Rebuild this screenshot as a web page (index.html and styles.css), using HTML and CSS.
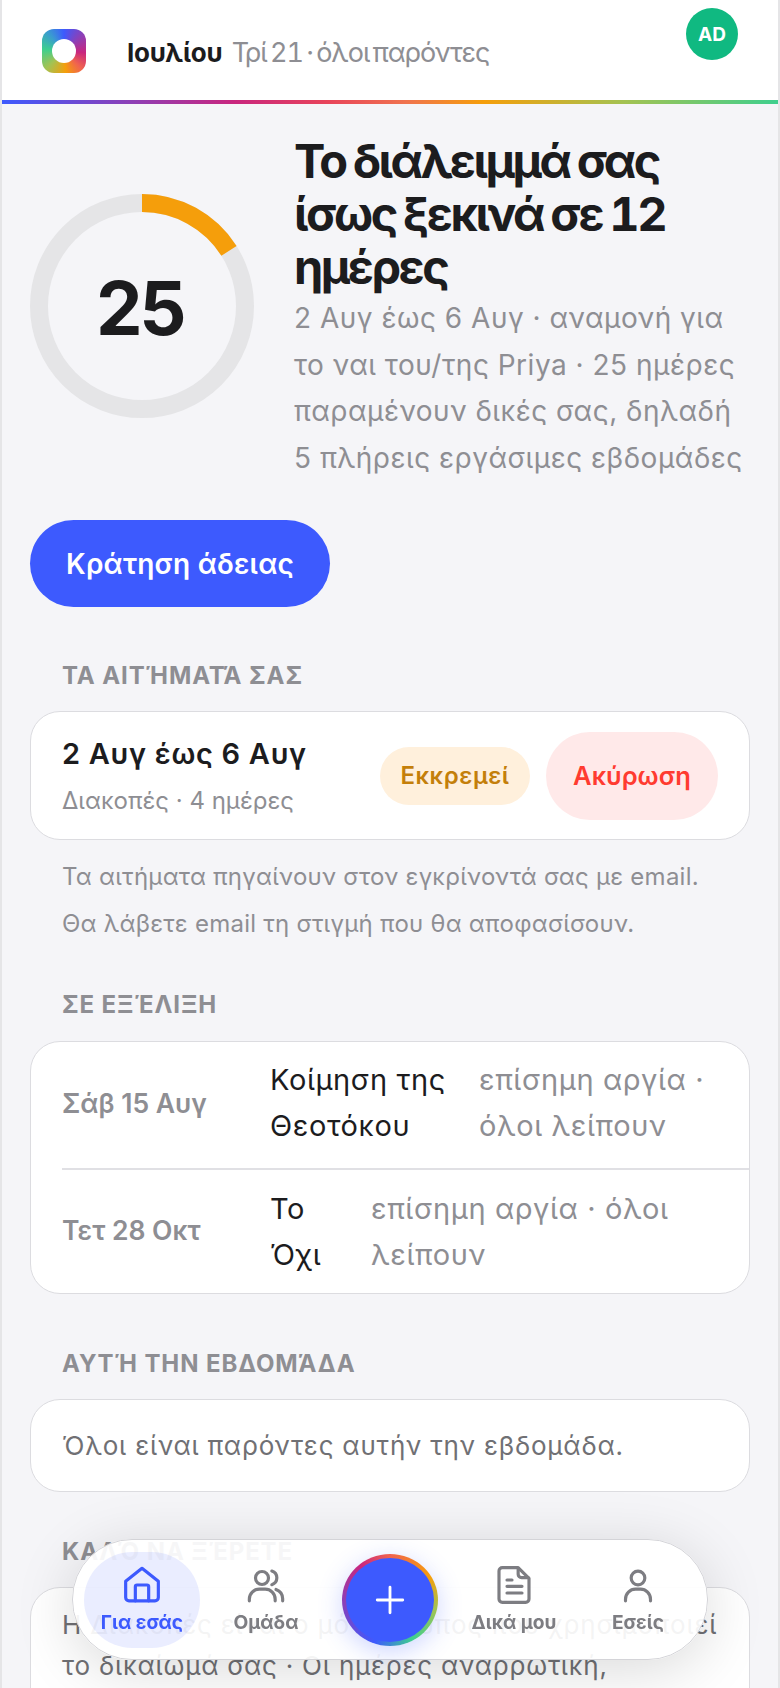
FILE: index.html
```html
<!DOCTYPE html>
<html lang="el">
  <head>
    <meta charset="UTF-8" />
    <meta name="viewport" content="width=device-width, initial-scale=1.0" />
    <title>Ιουλίου</title>
    <link rel="stylesheet" href="styles.css">
  </head>
  <body>
    <div class="shell">
      <header class="topbar">
        <div class="logo"><span class="logo-hole"></span></div>
        <div class="today"><b>Ιουλίου</b> <span>Τρί 21 · όλοι παρόντες</span></div>
        <div class="avatar">AD</div>
      </header>

      <main class="content">
        <section class="hero">
          <div class="ring">
            <svg viewBox="0 0 224 224" width="224" height="224">
              <circle cx="112" cy="112" r="103" fill="none" stroke="#e5e5e7" stroke-width="18" />
              <circle cx="112" cy="112" r="103" fill="none" stroke="#f59e0b" stroke-width="18"
                pathLength="100" stroke-dasharray="16 84" transform="rotate(-90 112 112)" />
            </svg>
            <div class="ring-num">25</div>
          </div>
          <div class="hero-text">
            <h1>Το διάλειμμά σας ίσως ξεκινά σε 12 ημέρες</h1>
            <p>2 Αυγ έως 6 Αυγ · αναμονή για το ναι του/της Priya · 25 ημέρες παραμένουν δικές σας, δηλαδή 5 πλήρεις εργάσιμες εβδομάδες</p>
          </div>
        </section>

        <button class="book">Κράτηση άδειας</button>

        <h2 class="label label-first">ΤΑ ΑΙΤΉΜΑΤΆ ΣΑΣ</h2>
        <div class="card request">
          <div class="request-info">
            <div class="request-title">2 Αυγ έως 6 Αυγ</div>
            <div class="request-sub">Διακοπές · 4 ημέρες</div>
          </div>
          <span class="badge">Εκκρεμεί</span>
          <button class="cancel">Ακύρωση</button>
        </div>
        <p class="note">Τα αιτήματα πηγαίνουν στον εγκρίνοντά σας με email.<br>Θα λάβετε email τη στιγμή που θα αποφασίσουν.</p>

        <h2 class="label label-holidays">ΣΕ ΕΞΈΛΙΞΗ</h2>
        <div class="card holidays">
          <div class="holiday">
            <div class="holiday-date">Σάβ 15 Αυγ</div>
            <div class="holiday-name name-long">Κοίμηση της Θεοτόκου</div>
            <div class="holiday-desc">επίσημη αργία · όλοι λείπουν</div>
          </div>
          <div class="holiday">
            <div class="holiday-date">Τετ 28 Οκτ</div>
            <div class="holiday-name name-short">Το<br>Όχι</div>
            <div class="holiday-desc">επίσημη αργία · όλοι<br>λείπουν</div>
          </div>
        </div>

        <h2 class="label label-week">ΑΥΤΉ ΤΗΝ ΕΒΔΟΜΆΔΑ</h2>
        <div class="card plain">Όλοι είναι παρόντες αυτήν την εβδομάδα.</div>

        <h2 class="label">ΚΑΛΌ ΝΑ ΞΈΡΕΤΕ</h2>
        <div class="card plain tip">Η Διακοπές είναι ο μόνος τύπος που χρησιμοποιεί<br>το δικαίωμά σας · Οι ημέρες αναρρωτική,</div>
      </main>

      <nav class="tabbar">
        <a class="tab active">
          <svg viewBox="0 0 24 24" class="tab-icon"><path d="M2.2 9.8 12 2l9.8 7.8v9.7a2 2 0 0 1-2 2H4.2a2 2 0 0 1-2-2z" /><path d="M8 21.5V13a1 1 0 0 1 1-1h6a1 1 0 0 1 1 1v8.5" /></svg>
          <span>Για εσάς</span>
        </a>
        <a class="tab">
          <svg viewBox="0 0 24 24" class="tab-icon"><circle cx="9.6" cy="7.8" r="3.9" /><path d="M2 21.5v-1a6 6 0 0 1 6-6h3.5a6 6 0 0 1 6 6v1" /><path d="M15.5 3.6a4.3 4.3 0 0 1 0 8.2" /><path d="M18 14.7a6 6 0 0 1 4 5.6v1.2" /></svg>
          <span>Ομάδα</span>
        </a>
        <div class="fab-wrap">
          <button class="fab">
            <svg viewBox="0 0 24 24" width="34" height="34"><path d="M12 3v18M3 12h18" fill="none" stroke="#fff" stroke-width="2" stroke-linecap="round" /></svg>
          </button>
        </div>
        <a class="tab">
          <svg viewBox="0 0 24 24" class="tab-icon"><path d="M5 1.6h9.5L21 8v12.4a2 2 0 0 1-2 2H5a2 2 0 0 1-2-2V3.6a2 2 0 0 1 2-2z" /><path d="M14.5 2v3.6a2 2 0 0 0 2 2h4" /><path d="M7.8 9h3M7.8 12.8h9M7.8 16.8h9" /></svg>
          <span>Δικά μου</span>
        </a>
        <a class="tab">
          <svg viewBox="0 0 24 24" class="tab-icon"><circle cx="12" cy="7.8" r="4.1" /><path d="M4.5 21.5v-1a6 6 0 0 1 6-6h3a6 6 0 0 1 6 6v1" /></svg>
          <span>Εσείς</span>
        </a>
      </nav>
    </div>
  </body>
</html>
```

FILE: styles.css
```css
* {
  margin: 0;
  box-sizing: border-box;
  font-family: Inter, "Noto Sans", sans-serif;
}
html, body {
  height: 1688px;
  overflow: hidden;
}
body {
  background-color: #f5f5f8;
}
.shell {
  height: 1688px;
  overflow: hidden;
  border-left: 2px solid #e5e5e7;
  border-right: 2px solid #e5e5e7;
  color: #1c1c1e;
}

/* top bar */
.topbar {
  position: relative;
  display: flex;
  align-items: center;
  height: 104px;
  padding: 2px 0 0 40px;
  background: #fff;
  border-bottom: 4px solid;
  border-image: linear-gradient(90deg, #3d5afe, #8e3fb5 17%, #c9267e 30%, #e8445a 42%, #f0734f 52%, #f59e0b 62%, #a4c252 80%, #3ecf8e) 1;
}
.logo {
  display: flex;
  align-items: center;
  justify-content: center;
  width: 44px;
  height: 44px;
  border-radius: 12px;
  background: conic-gradient(#3d5afe, #8e3fb5 50deg, #c9267e 95deg, #f0634f 135deg, #f59e0b 175deg, #a4c252 225deg, #3ecf8e 275deg, #3a9bd0 320deg, #3d5afe);
}
.logo-hole {
  width: 24px;
  height: 24px;
  border-radius: 50%;
  background: #fff;
}
.today {
  margin: 2px 0 0 41px;
  font-size: 27px;
  color: #8e8e93;
  letter-spacing: -1px;
  word-spacing: -3px;
  font-variant-numeric: tabular-nums;
}
.today b {
  color: #1c1c1e;
  font-size: 26px;
  font-weight: 700;
  letter-spacing: -0.2px;
  margin-right: 6px;
}
.avatar {
  position: absolute;
  top: 8px;
  right: 40px;
  display: flex;
  align-items: center;
  justify-content: center;
  width: 52px;
  height: 52px;
  border-radius: 50%;
  background: #10b981;
  color: #fff;
  font-size: 19px;
  font-weight: 700;
}

/* hero */
.content {
  padding: 30px 28px 0;
}
.hero {
  display: flex;
  align-items: center;
  gap: 40px;
}
.ring {
  position: relative;
  flex: none;
  width: 224px;
  height: 224px;
  margin-top: -4px;
}
.ring svg {
  display: block;
}
.ring-num {
  position: absolute;
  inset: 0;
  display: flex;
  align-items: center;
  justify-content: center;
  padding: 4px 5px 0 0;
  font-size: 74px;
  font-weight: 700;
  letter-spacing: -3.5px;
}
.hero-text h1 {
  font-size: 47px;
  line-height: 53px;
  font-weight: 700;
  letter-spacing: -2.5px;
  word-spacing: -3px;
  font-variant-numeric: tabular-nums;
}
.hero-text p {
  margin-top: 2px;
  font-size: 28px;
  line-height: 46.5px;
  letter-spacing: 0.5px;
  color: #8e8e93;
}

.book {
  display: block;
  width: 300px;
  height: 87px;
  margin-top: 39px;
  border: none;
  border-radius: 44px;
  background: #3d5afe;
  color: #fff;
  font-size: 28px;
  font-weight: 600;
  letter-spacing: 0.2px;
}

/* sections */
.label {
  margin: 45px 0 20px 32px;
  font-size: 24px;
  line-height: 30px;
  font-weight: 700;
  letter-spacing: 0.9px;
  color: #8e8e93;
}
.label-first {
  margin-top: 54px;
}
.label-holidays {
  margin-top: 43px;
  margin-bottom: 21px;
}
.label-week {
  margin-top: 55px;
}
.card {
  background: #fff;
  border: 1.5px solid #dcdce0;
  border-radius: 30px;
}
.request {
  display: flex;
  align-items: center;
  height: 129px;
  padding: 0 31px;
}
.request-info {
  flex: 1;
}
.request-title {
  font-size: 29px;
  font-weight: 600;
  letter-spacing: 0.7px;
}
.request-sub {
  margin-top: 15px;
  font-size: 24px;
  color: #8e8e93;
}
.badge {
  display: flex;
  align-items: center;
  justify-content: center;
  width: 150px;
  height: 58px;
  border-radius: 29px;
  background: #fff0dc;
  color: #c47f0a;
  font-size: 24px;
  font-weight: 600;
  letter-spacing: 0.5px;
}
.cancel {
  width: 172px;
  height: 88px;
  margin-left: 16px;
  border: none;
  border-radius: 44px;
  background: #ffe9e9;
  color: #ff3b30;
  font-size: 25.5px;
  font-weight: 600;
}
.note {
  margin: 14px 0 0 32px;
  font-size: 24px;
  line-height: 46.5px;
  letter-spacing: 0.25px;
  color: #8e8e93;
}

/* holidays */
.holidays {
  padding-left: 31px;
}
.holiday {
  display: flex;
  align-items: center;
  height: 126px;
  padding-bottom: 4px;
}
.holiday + .holiday {
  height: 125px;
  padding-bottom: 0;
  border-top: 2px solid #e0e0e4;
}
.holiday + .holiday .holiday-date {
  padding-bottom: 4px;
}
.holiday-date {
  flex: none;
  width: 208px;
  font-size: 26.5px;
  font-weight: 600;
  color: #8e8e93;
}
.holiday-name, .holiday-desc {
  font-size: 29px;
  line-height: 46px;
  letter-spacing: 0.6px;
}
.name-long {
  flex: none;
  width: 209px;
}
.name-short {
  flex: none;
  width: 101px;
}
.holiday-desc {
  color: #8e8e93;
}

.plain {
  padding: 23px 31px 22px;
  font-size: 26px;
  line-height: 46px;
  letter-spacing: 0.8px;
  color: #707074;
}
.tip {
  padding: 16px 31px 60px;
  line-height: 41px;
  white-space: nowrap;
}

/* floating nav */
.tabbar {
  position: fixed;
  left: 72px;
  top: 1539px;
  display: flex;
  align-items: center;
  gap: 8px;
  width: 636px;
  height: 121px;
  padding: 0 11px;
  border: 1px solid #d4d4d8;
  border-radius: 60px;
  background: rgba(255, 255, 255, 0.92);
  box-shadow: 0 10px 60px rgba(0, 0, 0, 0.15);
}
.tab {
  display: flex;
  flex-direction: column;
  align-items: center;
  justify-content: center;
  gap: 5px;
  flex: none;
  width: 116px;
  height: 96px;
  border-radius: 48px;
  color: #7d7d82;
  font-size: 19.2px;
  line-height: 24px;
  font-weight: 700;
}
.tab.active {
  background: rgba(61, 90, 254, 0.11);
  color: #3d5afe;
}
.tab-icon {
  width: 40px;
  height: 40px;
  fill: none;
  stroke: currentColor;
  stroke-width: 1.9;
  stroke-linecap: round;
  stroke-linejoin: round;
}
.fab-wrap {
  flex: none;
  width: 116px;
  display: flex;
  justify-content: center;
}
.fab {
  display: flex;
  align-items: center;
  justify-content: center;
  width: 96px;
  height: 92px;
  padding: 0;
  border: 4px solid transparent;
  border-radius: 50%;
  background: linear-gradient(#3d5afe, #3d5afe) padding-box, conic-gradient(#f0634f, #f59e0b 60deg, #a4c252 100deg, #3ecf8e 150deg, #3d5afe 200deg, #8e3fb5 270deg, #c9267e 320deg, #f0634f) border-box;
  box-shadow: 0 6px 24px rgba(61, 90, 254, 0.25);
}
```
